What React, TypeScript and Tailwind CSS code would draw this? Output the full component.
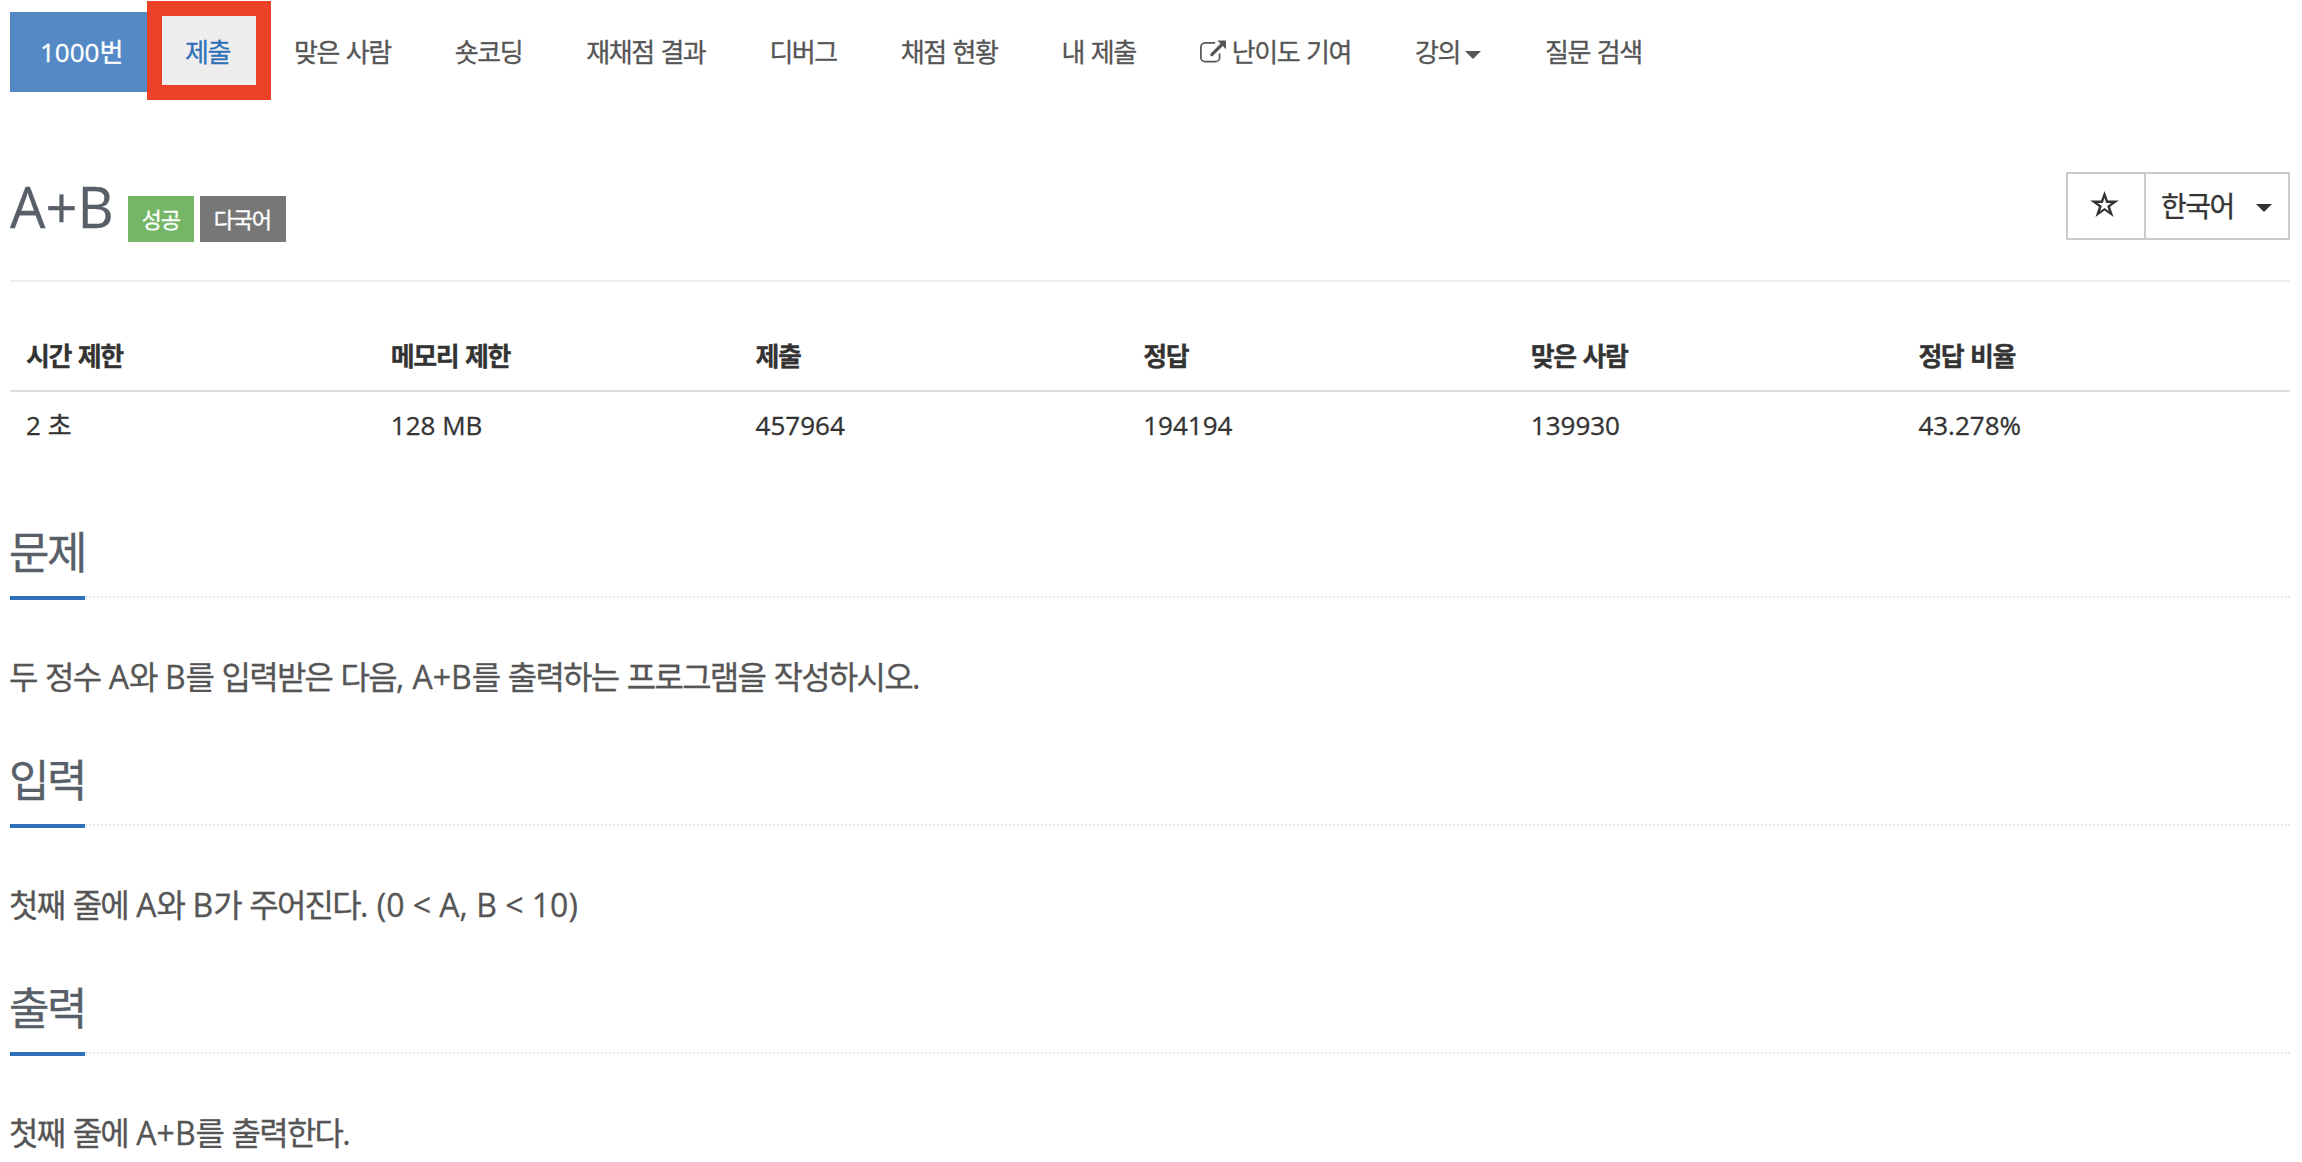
import type { ReactNode } from "react";

interface NavItem {
  label: ReactNode;
  icon?: boolean;
  caret?: boolean;
}

const navItems: NavItem[] = [
  { label: "맞은 사람" },
  { label: "숏코딩" },
  { label: "재채점 결과" },
  { label: "디버그" },
  { label: "채점 현황" },
  { label: "내 제출" },
  { label: "난이도 기여", icon: true },
  { label: "강의", caret: true },
  { label: "질문 검색" },
];

const stats = [
  { head: "시간 제한", value: <><Latin>2 </Latin>초</>, width: "w-[16%]" },
  { head: "메모리 제한", value: <Latin>128 MB</Latin>, width: "w-[16%]" },
  { head: "제출", value: <Latin>457964</Latin>, width: "w-[17%]" },
  { head: "정답", value: <Latin>194194</Latin>, width: "w-[17%]" },
  { head: "맞은 사람", value: <Latin>139930</Latin>, width: "w-[17%]" },
  { head: "정답 비율", value: <Latin>43.278%</Latin>, width: "w-[17%]" },
];

// Hangul is set slightly tight; word-spacing keeps the blanks at full width
const tight = "tracking-[-0.055em] [word-spacing:0.055em]";

function Latin({ children }: { children: ReactNode }) {
  return <span className="tracking-normal [word-spacing:0]">{children}</span>;
}

function Caret({ className }: { className: string }) {
  return (
    <span
      className={`inline-block h-0 w-0 border-x-8 border-t-8 border-x-transparent ${className}`}
    />
  );
}

function ExternalLinkIcon() {
  return (
    <svg className="mr-[6px] h-6 w-[26px]" viewBox="0 0 26 24" fill="none" stroke="currentColor">
      <path
        strokeWidth="1.7"
        strokeLinecap="round"
        d="M14.5 2.8H5A4.2 4.2 0 0 0 .9 7v10.5A4.2 4.2 0 0 0 5 21.7h10.4a4.2 4.2 0 0 0 4.2-4.2V14"
      />
      <path strokeWidth="3.2" strokeLinecap="round" d="M11.8 14.6 21.5 5" />
      <path fill="currentColor" stroke="none" d="M17.3.4H25.2Q26 .4 26 1.2V9.2L23.3 6.6 19.8 3Z" />
    </svg>
  );
}

function StarIcon() {
  return (
    <svg className="mb-[5px] mr-[3px] h-[26px] w-[29px]" viewBox="-0.5 0 29 26" fill="currentColor">
      <path
        fillRule="evenodd"
        d="M14 0 17.4 9.6H28.3L19.6 15.7 23 26 14 19.6 5 26 8.4 15.7-.3 9.6H10.6ZM14 7 12.3 12H7.2L11.3 15 9.7 20.1 14 17 18.3 20.1 16.7 15 20.8 12H15.7Z"
      />
    </svg>
  );
}

function Section({ title, children }: { title: string; children: ReactNode }) {
  return (
    <section className="h-[228px]">
      <div className="flex h-[84px] border-b-2 border-dotted border-[#e4e9f0]">
        <h2 className={`h-[86px] border-b-4 border-[#2e71b8] pt-[6px] text-[44px] leading-[64px] text-[#585f69] ${tight}`}>
          <span className="-ml-px">{title}</span>
        </h2>
      </div>
      <p className={`-ml-px mt-[53px] text-[32px] leading-[52px] text-[#555] ${tight}`}>{children}</p>
    </section>
  );
}

export default function App() {
  return (
    <div className="h-[1162px] overflow-hidden bg-white pl-[10px] pr-3 font-['Open_Sans','Noto_Sans_CJK_KR',sans-serif] text-[#333] [-webkit-text-stroke:0.3px]">
      {/* Problem menu */}
      <nav className={`relative flex pt-3 text-[26px] leading-[80px] text-[#555] ${tight}`}>
        <a className="mr-1 h-20 bg-[#5589c6] pl-[30px] pr-[29px] text-white">
          <Latin>1000</Latin>번
        </a>
        <a className="mr-1 h-20 bg-[#eee] px-[30px] text-[#2e71b8]">제출</a>
        {navItems.map((item, i) => (
          <a key={i} className="mr-1 flex h-20 items-center px-[30px]">
            {item.icon && <ExternalLinkIcon />}
            <span>{item.label}</span>
            {item.caret && <Caret className="ml-[5px] mt-[6px] border-t-[#555]" />}
          </a>
        ))}
        <span className="absolute left-[137px] top-px h-[99px] w-[124px] border-[15px] border-[#eb4128]" />
      </nav>

      {/* Title */}
      <header className="flex h-[190px] justify-between border-b-2 border-[#eee]">
        <div className="flex pt-[76px]">
          <h1 className="-mt-0.5 text-[56px] leading-[80px] text-[#585f69]">
            <Latin>A+B</Latin>
          </h1>
          <div className={`ml-[14px] mt-7 flex gap-1.5 text-[22px] leading-[46px] text-white ${tight}`}>
            <span className="h-[46px] bg-[#74b566] px-[14px]">성공</span>
            <span className="h-[46px] bg-[#777] pl-[14px] pr-[15px]">다국어</span>
          </div>
        </div>
        <div className="mt-20 flex h-[68px] w-[224px] border-2 border-[#ccc]">
          <button className="flex w-[78px] items-center justify-center border-r-2 border-[#ccc]">
            <StarIcon />
          </button>
          <button className={`flex flex-1 items-center justify-between pl-[15px] pr-4 text-[28px] ${tight}`}>
            한국어
            <Caret className="mt-1 border-t-[#333]" />
          </button>
        </div>
      </header>

      {/* Limits and statistics */}
      <table className="mt-10 w-full table-fixed border-separate border-spacing-0 text-left text-[26px]">
        <thead>
          <tr className="h-[70px]">
            {stats.map((s) => (
              <th key={s.head} className={`${s.width} border-b-2 border-[#ddd] px-4 font-bold ${tight}`}>
                {s.head}
              </th>
            ))}
          </tr>
        </thead>
        <tbody>
          <tr className="h-[66px]">
            {stats.map((s) => (
              <td key={s.head} className={`px-4 ${tight}`}>
                {s.value}
              </td>
            ))}
          </tr>
        </tbody>
      </table>

      <div className="mt-14">
        <Section title="문제">
          두 정수 <Latin>A</Latin>와 <Latin>B</Latin>를 입력받은 다음<Latin>, A+B</Latin>를 출력하는
          프로그램을 작성하시오<Latin>.</Latin>
        </Section>
        <Section title="입력">
          첫째 줄에 <Latin>A</Latin>와 <Latin>B</Latin>가 주어진다
          <Latin>. (0 &lt; A, B &lt; 10)</Latin>
        </Section>
        <Section title="출력">
          첫째 줄에 <Latin>A+B</Latin>를 출력한다<Latin>.</Latin>
        </Section>
      </div>
    </div>
  );
}
